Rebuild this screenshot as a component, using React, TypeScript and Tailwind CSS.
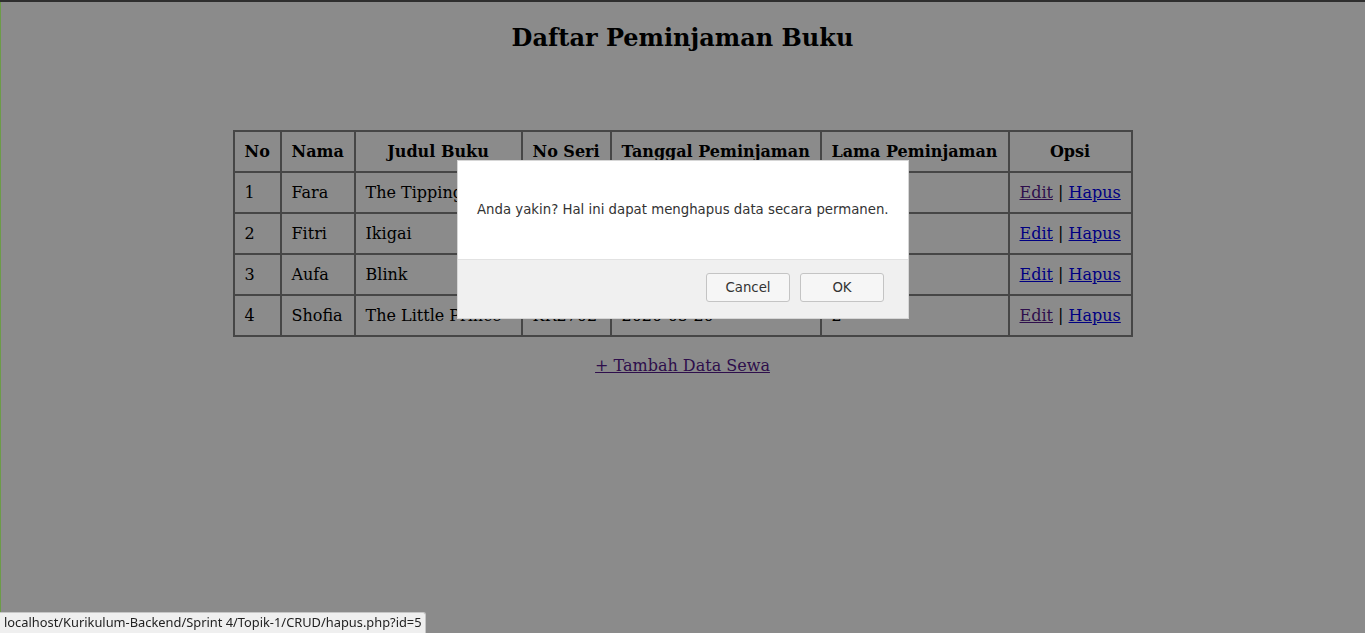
import React from "react";

type Row = {
  no: number;
  nama: string;
  judul: string;
  seri: string;
  tanggal: string;
  lama: string;
  editVisited: boolean;
};

const rows: Row[] = [
  { no: 1, nama: "Fara", judul: "The Tipping Point", seri: "TP1021", tanggal: "2020-05-12", lama: "3", editVisited: true },
  { no: 2, nama: "Fitri", judul: "Ikigai", seri: "IK3310", tanggal: "2020-05-14", lama: "5", editVisited: false },
  { no: 3, nama: "Aufa", judul: "Blink", seri: "BL2208", tanggal: "2020-05-17", lama: "4", editVisited: false },
  { no: 4, nama: "Shofia", judul: "The Little Prince", seri: "KR2702", tanggal: "2020-05-20", lama: "2", editVisited: true },
];

const cell = "border border-[#808080] px-[10px] py-[10px] leading-[19px] whitespace-nowrap";

export default function App() {
  return (
    <div className="relative min-h-[633px] bg-white text-black font-['DejaVu_Serif',serif] text-[16px]">
      {/* page */}
      <h2 className="pt-[24px] text-center text-[24px] font-bold leading-[28px]">
        Daftar Peminjaman Buku
      </h2>

      <table className="mx-auto mt-[78px] w-[898px] table-fixed border-separate border-spacing-0 border border-[#808080]">
        <thead>
          <tr>
            <th className={`${cell} w-[47px] text-center`}>No</th>
            <th className={`${cell} w-[74px] text-center`}>Nama</th>
            <th className={`${cell} w-[167px] text-center`}>Judul Buku</th>
            <th className={`${cell} w-[89px] text-center`}>No Seri</th>
            <th className={`${cell} w-[210px] text-center`}>Tanggal Peminjaman</th>
            <th className={`${cell} w-[188px] text-center`}>Lama Peminjaman</th>
            <th className={`${cell} w-[123px] text-center`}>Opsi</th>
          </tr>
        </thead>
        <tbody>
          {rows.map((r) => (
            <tr key={r.no}>
              <td className={cell}>{r.no}</td>
              <td className={cell}>{r.nama}</td>
              <td className={`${cell} overflow-hidden`}>{r.judul}</td>
              <td className={cell}>{r.seri}</td>
              <td className={cell}>{r.tanggal}</td>
              <td className={cell}>{r.lama}</td>
              <td className={`${cell} text-center`}>
                <a href="#" className={r.editVisited ? "underline text-[#551a8b]" : "underline text-[#0000ee]"}>
                  Edit
                </a>{" "}
                |{" "}
                <a href="#" className="underline text-[#0000ee]">
                  Hapus
                </a>
              </td>
            </tr>
          ))}
        </tbody>
      </table>

      <p className="mt-[19px] text-center leading-[20px]">
        <a href="#" className="underline text-[#551a8b]">
          + Tambah Data Sewa
        </a>
      </p>

      {/* dim overlay */}
      <div className="fixed inset-0 bg-[rgba(0,0,0,0.455)]" />
      <div className="fixed left-0 top-0 h-[2px] w-full bg-[#2e2e2e]" />
      <div className="fixed left-0 top-[2px] bottom-0 w-[1px] bg-[#6c9c48]" />

      {/* confirm dialog */}
      <div className="fixed left-[457px] top-[160px] w-[452px] overflow-hidden border border-[#d6d6d6] bg-white font-['DejaVu_Sans',sans-serif] text-[13.3px] text-[#333]">
        <div className="flex h-[98px] items-center px-[19px]">
          Anda yakin? Hal ini dapat menghapus data secara permanen.
        </div>
        <div className="flex h-[59px] justify-end gap-[10px] border-t border-[#e2e2e2] bg-[#f0f0f0] pr-[24px] pt-[13px]">
          <button className="h-[29px] w-[84px] rounded-[3px] border border-[#c4c4c4] bg-[#f6f6f6] text-[13.3px] text-[#333]">
            Cancel
          </button>
          <button className="h-[29px] w-[84px] rounded-[3px] border border-[#c4c4c4] bg-[#f6f6f6] text-[13.3px] text-[#333]">
            OK
          </button>
        </div>
      </div>

      {/* status bar */}
      <div className="fixed bottom-0 left-0 flex h-[21px] items-center rounded-tr-[3px] border-t border-r border-[#c6c6c6] bg-[#efefef] pl-[4px] pr-[3px] font-['Noto_Sans',sans-serif] text-[12.85px] text-[#222]">
        localhost/Kurikulum-Backend/Sprint 4/Topik-1/CRUD/hapus.php?id=5
      </div>
    </div>
  );
}
